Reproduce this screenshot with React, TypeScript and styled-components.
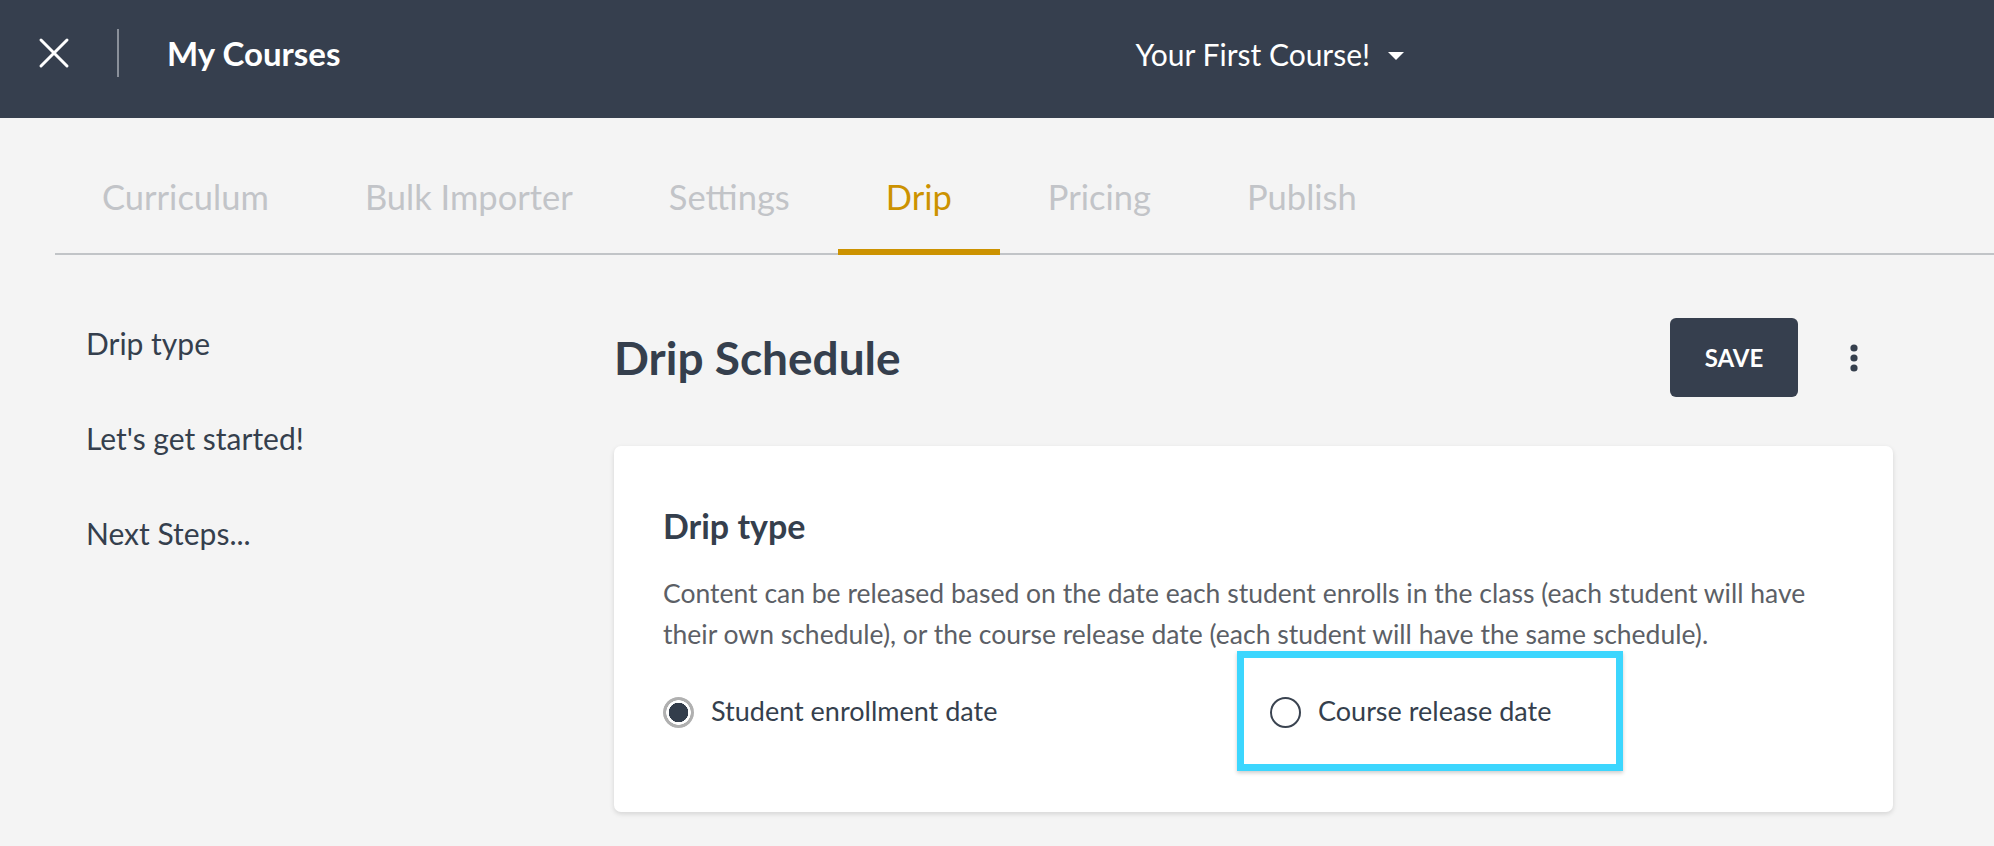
import styled, { createGlobalStyle } from "styled-components";

const GlobalStyle = createGlobalStyle`
  html, body {
    margin: 0;
    padding: 0;
    background: #f4f4f4;
    font-family: "Lato", "Open Sans", sans-serif;
    color: #353f4d;
  }
  * {
    box-sizing: border-box;
  }
`;

const tabs = ["Curriculum", "Bulk Importer", "Settings", "Drip", "Pricing", "Publish"];
const sideLinks = ["Drip type", "Let's get started!", "Next Steps..."];

const App = () => {
  return (
    <Page>
      <GlobalStyle />
      <TopBar>
        <CloseButton aria-label="close">
          <svg width="32" height="32" viewBox="0 0 32 32">
            <path d="M3 3 L29 29 M29 3 L3 29" stroke="#fff" strokeWidth="3" strokeLinecap="round" />
          </svg>
        </CloseButton>
        <Divider />
        <BarTitle>My Courses</BarTitle>
        <CourseSelect>
          Your First Course!
          <Caret />
        </CourseSelect>
      </TopBar>

      <TabBar>
        {tabs.map((t) => (
          <Tab key={t} $active={t === "Drip"}>
            {t}
          </Tab>
        ))}
      </TabBar>

      <Body>
        <SideNav>
          {sideLinks.map((l) => (
            <SideLink key={l}>{l}</SideLink>
          ))}
        </SideNav>

        <Content>
          <ContentHeader>
            <PageTitle>Drip Schedule</PageTitle>
            <Actions>
              <SaveButton>SAVE</SaveButton>
              <MoreButton aria-label="more">
                <svg width="8" height="28" viewBox="0 0 8 28">
                  <circle cx="4" cy="4" r="3.6" fill="#353f4d" />
                  <circle cx="4" cy="14" r="3.6" fill="#353f4d" />
                  <circle cx="4" cy="24" r="3.6" fill="#353f4d" />
                </svg>
              </MoreButton>
            </Actions>
          </ContentHeader>

          <Card>
            <CardTitle>Drip type</CardTitle>
            <CardText>
              Content can be released based on the date each student enrolls in the class (each student will have
              <br />
              their own schedule), or the course release date (each student will have the same schedule).
            </CardText>
            <RadioRow>
              <RadioOption>
                <RadioDot $checked />
                <RadioLabel>Student enrollment date</RadioLabel>
              </RadioOption>
              <RadioOption>
                <RadioDot />
                <RadioLabel>Course release date</RadioLabel>
                <Highlight />
              </RadioOption>
            </RadioRow>
          </Card>
        </Content>
      </Body>
    </Page>
  );
};

const Page = styled.div`
  min-height: 846px;
  background: #f4f4f4;
`;

const TopBar = styled.header`
  height: 118px;
  background: #363f4e;
  display: flex;
  align-items: center;
  padding: 0 0 13px 38px;
`;

const CloseButton = styled.button`
  width: 32px;
  height: 32px;
  padding: 0;
  border: 0;
  background: none;
  display: flex;
  align-items: center;
  justify-content: center;
`;

const Divider = styled.div`
  width: 2px;
  height: 48px;
  background: #8a909a;
  margin-left: 47px;
`;

const BarTitle = styled.div`
  margin-left: 48px;
  font-size: 33px;
  font-weight: 700;
  color: #fff;
`;

const CourseSelect = styled.div`
  margin-left: 795px;
  display: flex;
  align-items: center;
  font-size: 30px;
  color: #fff;
  margin-top: 3px;
`;

const Caret = styled.span`
  width: 0;
  height: 0;
  margin-left: 18px;
  margin-top: 3px;
  border-left: 8px solid transparent;
  border-right: 8px solid transparent;
  border-top: 8px solid #fff;
`;

const TabBar = styled.nav`
  display: flex;
  margin-left: 55px;
  border-bottom: 2px solid #c1c4c7;
`;

const Tab = styled.div<{ $active?: boolean }>`
  position: relative;
  padding: 59px 48px 36px 48px;
  font-size: 34.5px;
  line-height: 40px;
  color: ${({ $active }) => ($active ? "#cc9200" : "#c2c4c8")};

  &:first-child {
    padding-left: 47px;
  }

  &::after {
    content: "";
    display: ${({ $active }) => ($active ? "block" : "none")};
    position: absolute;
    left: 0;
    right: 0;
    bottom: -2px;
    height: 6px;
    background: #cc9200;
  }
`;

const Body = styled.div`
  display: grid;
  grid-template-columns: 614px 1fr;
  padding-right: 101px;
`;

const SideNav = styled.aside`
  display: flex;
  flex-direction: column;
  gap: 59px;
  padding: 70px 0 0 86px;
`;

const SideLink = styled.div`
  font-size: 30px;
  line-height: 36px;
  color: #353f4d;
`;

const Content = styled.main`
  padding-top: 63px;
  padding-bottom: 30px;
`;

const ContentHeader = styled.div`
  display: flex;
  align-items: center;
  justify-content: space-between;
  height: 79px;
`;

const PageTitle = styled.h1`
  margin: 0;
  font-size: 46px;
  font-weight: 700;
  color: #353f4d;
`;

const Actions = styled.div`
  display: flex;
  align-items: center;
`;

const SaveButton = styled.button`
  width: 128px;
  height: 79px;
  border: 0;
  border-radius: 6px;
  background: #363f4e;
  color: #fff;
  font-family: inherit;
  font-size: 24px;
  font-weight: 700;
`;

const MoreButton = styled.button`
  width: 78px;
  height: 79px;
  margin-left: 17px;
  border: 0;
  background: none;
  display: flex;
  align-items: center;
  justify-content: center;
  padding: 0;
`;

const Card = styled.section`
  margin-top: 49px;
  background: #fff;
  border-radius: 7px;
  box-shadow: 0 2px 5px rgba(0, 0, 0, 0.13);
  padding: 60px 49px 84px;
`;

const CardTitle = styled.h2`
  margin: 0;
  font-size: 34px;
  line-height: 40px;
  font-weight: 700;
  color: #353f4d;
`;

const CardText = styled.p`
  margin: 27px 0 0;
  font-size: 26.5px;
  line-height: 41px;
  color: #5c5f66;
  white-space: nowrap;
`;

const RadioRow = styled.div`
  display: grid;
  grid-template-columns: 607px 1fr;
  margin-top: 37px;
`;

const RadioOption = styled.label`
  position: relative;
  display: flex;
  align-items: center;
  height: 36px;
`;

const RadioDot = styled.span<{ $checked?: boolean }>`
  width: 31px;
  height: 31px;
  border-radius: 50%;
  flex-shrink: 0;
  margin-top: 4px;
  ${({ $checked }) =>
    $checked
      ? `
    background: radial-gradient(circle, #333d4b 0 9.5px, #fff 10px 12px, #b0b0b0 12.5px 15.5px, transparent 16px);
  `
      : `
    border: 2px solid #3a4350;
    background: #fff;
  `}
`;

const RadioLabel = styled.span`
  margin-left: 17px;
  font-size: 27px;
  color: #353f4d;
`;

const Highlight = styled.span`
  position: absolute;
  left: -33px;
  top: -41px;
  width: 386px;
  height: 120px;
  border: 7px solid #3cd6fe;
  box-shadow: 0 2px 4px rgba(0, 0, 0, 0.2);
  pointer-events: none;
`;

export default App;
